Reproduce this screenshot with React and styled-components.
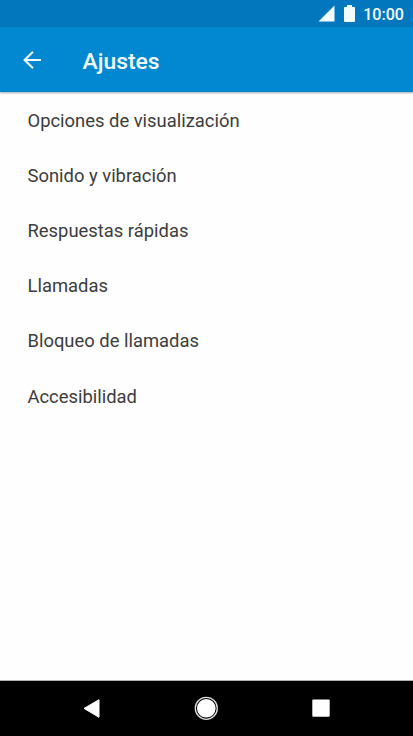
import React from "react";
import styled, { createGlobalStyle } from "styled-components";

const GlobalStyle = createGlobalStyle`
  * {
    box-sizing: border-box;
  }
  body {
    margin: 0;
    background: #fefefe;
    font-family: Roboto, "Liberation Sans", sans-serif;
  }
`;

const Screen = styled.div`
  display: flex;
  flex-direction: column;
  width: 100%;
  height: 100vh;
  overflow: hidden;
`;

const StatusBar = styled.div`
  display: flex;
  align-items: center;
  justify-content: flex-end;
  flex-shrink: 0;
  height: 27px;
  padding: 0 9px 0 0;
  background: #0277bd;
  color: #f4fbff;
`;

const StatusIcon = styled.svg`
  display: block;
  margin-right: ${props => props.$gap}px;
  fill: currentColor;
`;

const Clock = styled.span`
  padding-top: 2px;
  font-size: 16.1px;
  font-weight: 500;
  line-height: 20px;
`;

const AppBar = styled.header`
  display: flex;
  align-items: center;
  flex-shrink: 0;
  height: 65px;
  padding: 1px 0 0 23px;
  background: #0288d1;
  color: #f0fbff;
  box-shadow: 0 1px 2px rgba(0, 0, 0, 0.35);
`;

const BackButton = styled.button`
  width: 18px;
  height: 18px;
  margin: 0 41.5px 0 0;
  padding: 0;
  border: none;
  background: none;
  color: inherit;
  svg {
    display: block;
  }
`;

const Title = styled.h1`
  margin: 3px 0 0;
  font-size: 22.9px;
  font-weight: 500;
  line-height: 30px;
`;

const List = styled.ul`
  flex: 1;
  margin: 0;
  padding: 0;
  list-style: none;
`;

const Item = styled.li`
  display: flex;
  align-items: center;
  height: 55.2px;
  padding: 1px 0 0 27.5px;
  color: #3c3c3c;
  font-size: 18.4px;
`;

const NavBar = styled.nav`
  flex-shrink: 0;
  height: 56px;
  padding-bottom: 2px;
  border-top: 1px solid #aeb4b4;
  background: #000;
  display: grid;
  grid-template-columns: 100px 1fr 101px;
  align-items: center;
`;

const NavButton = styled.button`
  display: flex;
  justify-content: ${props => props.$align || "center"};
  padding: 0;
  border: none;
  background: none;
  svg {
    display: block;
    flex-shrink: 0;
  }
`;

const options = [
  "Opciones de visualización",
  "Sonido y vibración",
  "Respuestas rápidas",
  "Llamadas",
  "Bloqueo de llamadas",
  "Accesibilidad"
];

const App = () => (
  <Screen>
    <GlobalStyle />
    <StatusBar>
      <StatusIcon width="17" height="17" $gap={9}>
        <path d="M0.5 16.5L16.5 0.5V16.5z" />
      </StatusIcon>
      <StatusIcon width="11" height="17" $gap={8}>
        <path d="M3 0h5v2h2.2q.8 0 .8.8V16q0 1-1 1H1q-1 0-1-1V2.8Q0 2 .8 2H3z" />
      </StatusIcon>
      <Clock>10:00</Clock>
    </StatusBar>
    <AppBar>
      <BackButton aria-label="Atrás">
        <svg width="18" height="18" fill="none" stroke="currentColor" strokeWidth="2.1">
          <path d="M18 9H1.5M10 .8L1.6 9L10 17.2" />
        </svg>
      </BackButton>
      <Title>Ajustes</Title>
    </AppBar>
    <List>
      {options.map(option => (
        <Item key={option}>{option}</Item>
      ))}
    </List>
    <NavBar>
      <NavButton $align="flex-end">
        <svg width="20" height="20" viewBox="80 698 20 20">
          <path
            d="M84 708.4L99 699.7V717.3z"
            fill="#fff"
            stroke="#fff"
            strokeLinejoin="round"
          />
        </svg>
      </NavButton>
      <NavButton>
        <svg width="24" height="24">
          <circle cx="12.3" cy="12.3" r="11" fill="none" stroke="#ddd" strokeWidth="1.3" />
          <circle cx="12.3" cy="12.3" r="9.3" fill="#fff" />
        </svg>
      </NavButton>
      <NavButton $align="flex-start">
        <svg width="18" height="18">
          <rect x=".3" y=".4" width="17.4" height="17.4" rx="1" fill="#fff" />
        </svg>
      </NavButton>
    </NavBar>
  </Screen>
);

export default App;
